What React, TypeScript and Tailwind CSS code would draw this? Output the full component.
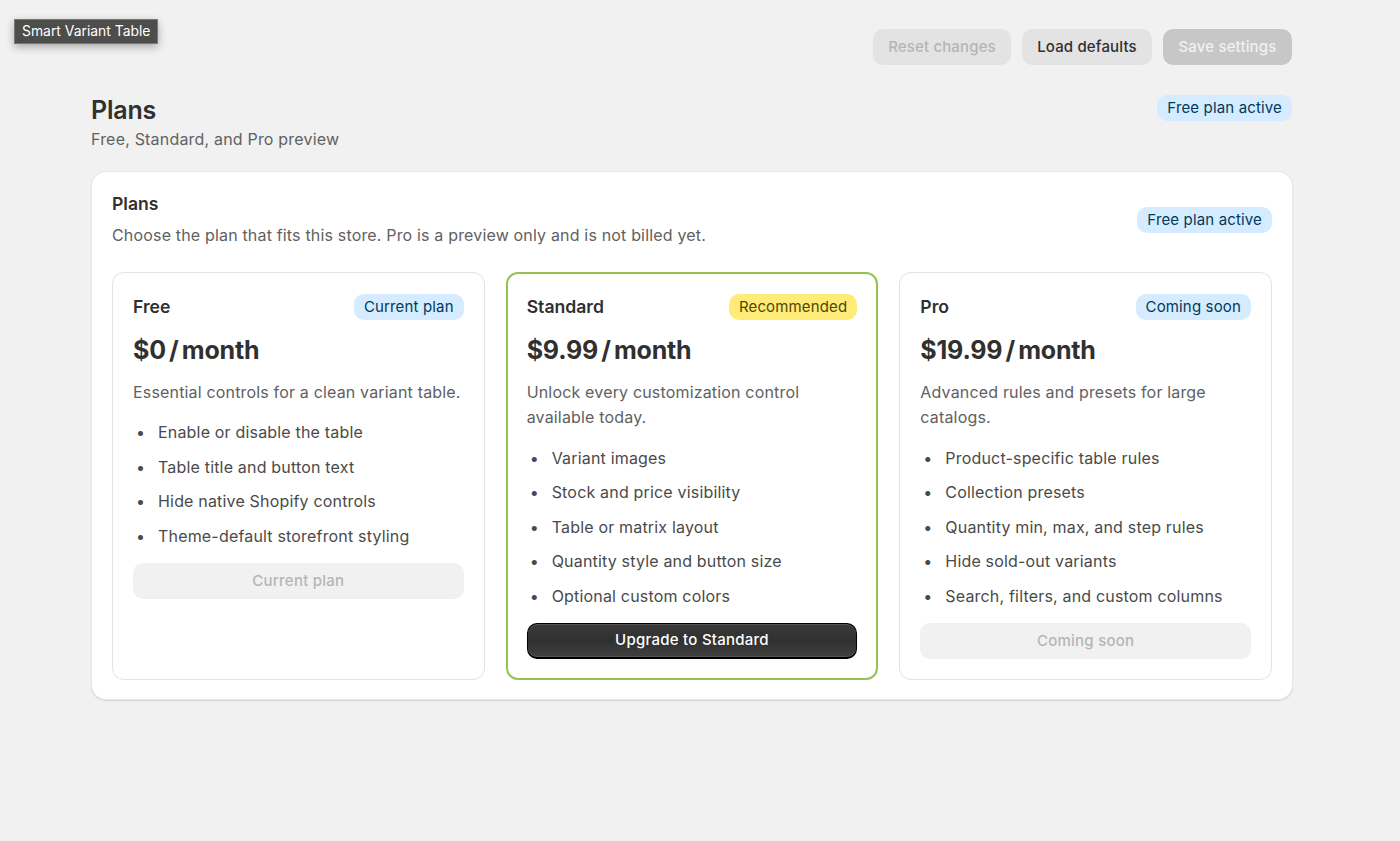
import React from 'react';

interface Plan {
  name: string;
  price: string;
  badge: string;
  badgeClass: string;
  description: string;
  features: string[];
  cta: string;
  primary?: boolean;
}

const plans: Plan[] = [
  {
    name: 'Free',
    price: '$0 / month',
    badge: 'Current plan',
    badgeClass: 'bg-[#d5ebff] text-[#003a5a]',
    description: 'Essential controls for a clean variant table.',
    features: [
      'Enable or disable the table',
      'Table title and button text',
      'Hide native Shopify controls',
      'Theme-default storefront styling',
    ],
    cta: 'Current plan',
  },
  {
    name: 'Standard',
    price: '$9.99 / month',
    badge: 'Recommended',
    badgeClass: 'bg-[#ffeb78] text-[#4f4700]',
    description: 'Unlock every customization control available today.',
    features: [
      'Variant images',
      'Stock and price visibility',
      'Table or matrix layout',
      'Quantity style and button size',
      'Optional custom colors',
    ],
    cta: 'Upgrade to Standard',
    primary: true,
  },
  {
    name: 'Pro',
    price: '$19.99 / month',
    badge: 'Coming soon',
    badgeClass: 'bg-[#d5ebff] text-[#003a5a]',
    description: 'Advanced rules and presets for large catalogs.',
    features: [
      'Product-specific table rules',
      'Collection presets',
      'Quantity min, max, and step rules',
      'Hide sold-out variants',
      'Search, filters, and custom columns',
    ],
    cta: 'Coming soon',
  },
];

const Badge: React.FC<{ className?: string; children: React.ReactNode }> = ({ className = '', children }) => (
  <span className={`inline-flex h-[26px] items-center rounded-[10px] px-[10px] text-[15px] font-normal tracking-[0.15px] ${className}`}>
    {children}
  </span>
);

const PlanCard: React.FC<{ plan: Plan }> = ({ plan }) => (
  <div
    className={`flex flex-col rounded-[12px] bg-white ${
      plan.primary
        ? 'border-[2.5px] border-[#95c351] px-[19px] pb-[19px] pt-[20px]'
        : 'border-[1.5px] border-[#e3e3e3] px-[20px] pb-[20px] pt-[21px]'
    }`}
  >
    <div className="flex h-[26px] items-center justify-between">
      <h3 className="text-[17.6px] font-semibold leading-[26px] text-[#303030]">{plan.name}</h3>
      <Badge className={plan.badgeClass}>{plan.badge}</Badge>
    </div>
    <div className="mt-[14px] h-[32px] text-[25px] font-[650] leading-[32px] tracking-[-0.2px] text-[#303030] [word-spacing:-2.5px]">
      {plan.price}
    </div>
    <p className="mt-[13.5px] text-[16px] leading-[25.5px] tracking-[0.17px] text-[#616161]">{plan.description}</p>
    <ul className="mt-[15px] flex flex-col gap-[9px] text-[16px] leading-[25.5px] tracking-[0.18px] text-[#4a4a4a]">
      {plan.features.map(feature => (
        <li key={feature} className="flex">
          <span className="w-[25px] shrink-0 pl-[3px] text-[#4a4a4a]">•</span>
          <span>{feature}</span>
        </li>
      ))}
    </ul>
    {plan.primary ? (
      <button className="mt-[14px] h-[36px] rounded-[10px] border border-b-2 border-black bg-gradient-to-b from-[#3a3a3a] via-[#303030] to-[#404040] text-[15px] font-[550] tracking-[0.25px] text-white shadow-[inset_0_1px_0_#555,inset_0_-1px_0_#555]">
        {plan.cta}
      </button>
    ) : (
      <button className="mt-[14px] h-[36px] rounded-[10px] bg-[#f1f1f1] text-[15px] font-[550] tracking-[0.25px] text-[#b5b5b5]">
        {plan.cta}
      </button>
    )}
  </div>
);

export default function App() {
  return (
    <div className="relative min-h-[841px] bg-[#f1f1f1] pl-[91px] pr-[108px] pt-[29px] font-['Inter',sans-serif]">
      <div className="absolute left-[14px] top-[19px] flex h-[25px] items-center border border-[#777] bg-[#4d4d4b] px-[7px] text-[13.9px] text-white shadow-[0_3px_8px_rgba(0,0,0,0.3)]">
        Smart Variant Table
      </div>

      <div className="flex justify-end gap-[11px]">
        <button className="h-[36px] w-[138px] rounded-[10px] bg-[#e3e3e3] text-[15px] font-[550] tracking-[0.15px] text-[#b5b5b5]">
          Reset changes
        </button>
        <button className="h-[36px] w-[130px] rounded-[10px] bg-[#e3e3e3] text-[15px] font-[550] tracking-[0.15px] text-[#303030]">
          Load defaults
        </button>
        <button className="h-[36px] w-[129px] rounded-[10px] bg-[#c7c7c7] text-[15px] font-[550] tracking-[0.15px] text-[#f1f1f1]">
          Save settings
        </button>
      </div>

      <div className="mt-[30px] flex items-start justify-between">
        <div>
          <h1 className="text-[25px] font-semibold leading-[30px] tracking-[-0.2px] text-[#303030]">Plans</h1>
          <p className="mt-[4px] text-[16px] leading-[20px] tracking-[0.19px] text-[#616161]">Free, Standard, and Pro preview</p>
        </div>
        <Badge className="bg-[#d5ebff] text-[#003a5a]">Free plan active</Badge>
      </div>

      <div className="ml-px mt-[23px] rounded-[14px] bg-white px-[20px] pb-[18.5px] pt-[20px] shadow-[0_0_0_1px_#e6e6e6,0_1px_1px_1px_#d4d4d4]">
        <div className="flex items-center justify-between">
          <div>
            <h2 className="text-[17.6px] font-semibold leading-[24px] text-[#303030]">Plans</h2>
            <p className="mt-[7px] text-[16px] leading-[25px] tracking-[0.17px] text-[#616161]">
              Choose the plan that fits this store. Pro is a preview only and is not billed yet.
            </p>
          </div>
          <Badge className="bg-[#d5ebff] text-[#003a5a]">Free plan active</Badge>
        </div>

        <div className="mt-[24px] grid grid-cols-3 gap-[21px]">
          {plans.map(plan => (
            <PlanCard key={plan.name} plan={plan} />
          ))}
        </div>
      </div>
    </div>
  );
}
